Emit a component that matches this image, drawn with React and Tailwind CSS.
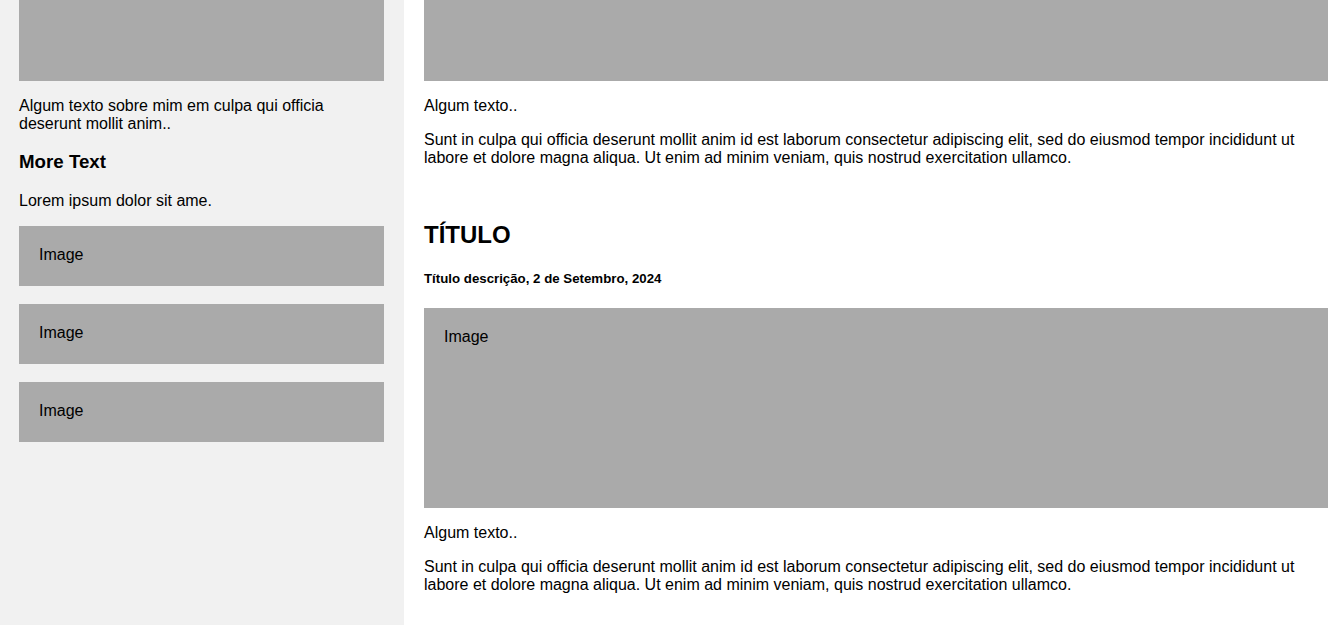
import React from 'react';

const para =
  'Sunt in culpa qui officia deserunt mollit anim id est laborum consectetur adipiscing elit, sed do eiusmod tempor incididunt ut labore et dolore magna aliqua. Ut enim ad minim veniam, quis nostrud exercitation ullamco.';

function ImageBox({ className = '' }) {
  return (
    <div className={`bg-[#aaaaaa] pl-5 pt-5 leading-[18px] ${className}`}>Image</div>
  );
}

export default function App() {
  return (
    <div className="flex h-[625px] overflow-hidden bg-white text-[16px] text-black font-['Liberation_Sans',Arial,sans-serif]">
      {/* Left column */}
      <aside className="w-[404px] shrink-0 bg-[#f1f1f1] pl-[19px] pr-5">
        <div className="h-[81px] bg-[#aaaaaa]" />
        <p className="mt-4 leading-[18px]">
          Algum texto sobre mim em culpa qui officia deserunt mollit anim..
        </p>
        <h3 className="mt-[18px] text-[18.72px] font-bold leading-[22px]">More Text</h3>
        <p className="mt-[19px] leading-[18px]">Lorem ipsum dolor sit ame.</p>
        <ImageBox className="mt-4 h-[60px]" />
        <ImageBox className="mt-[18px] h-[60px]" />
        <ImageBox className="mt-[18px] h-[60px]" />
      </aside>

      {/* Main column */}
      <main className="flex-1 pl-5 pr-4">
        <div className="h-[81px] bg-[#aaaaaa]" />
        <p className="mt-4 leading-[18px]">Algum texto..</p>
        <p className="mt-4 leading-[18px]">{para}</p>

        <h2 className="mt-[54px] text-[24px] font-bold leading-[28px]">TÍTULO</h2>
        <h5 className="mt-[22px] text-[13.28px] font-bold leading-[15px]">
          Título descrição, 2 de Setembro, 2024
        </h5>
        <ImageBox className="mt-[22px] h-[200px]" />
        <p className="mt-4 leading-[18px]">Algum texto..</p>
        <p className="mt-4 leading-[18px]">{para}</p>
      </main>
    </div>
  );
}
